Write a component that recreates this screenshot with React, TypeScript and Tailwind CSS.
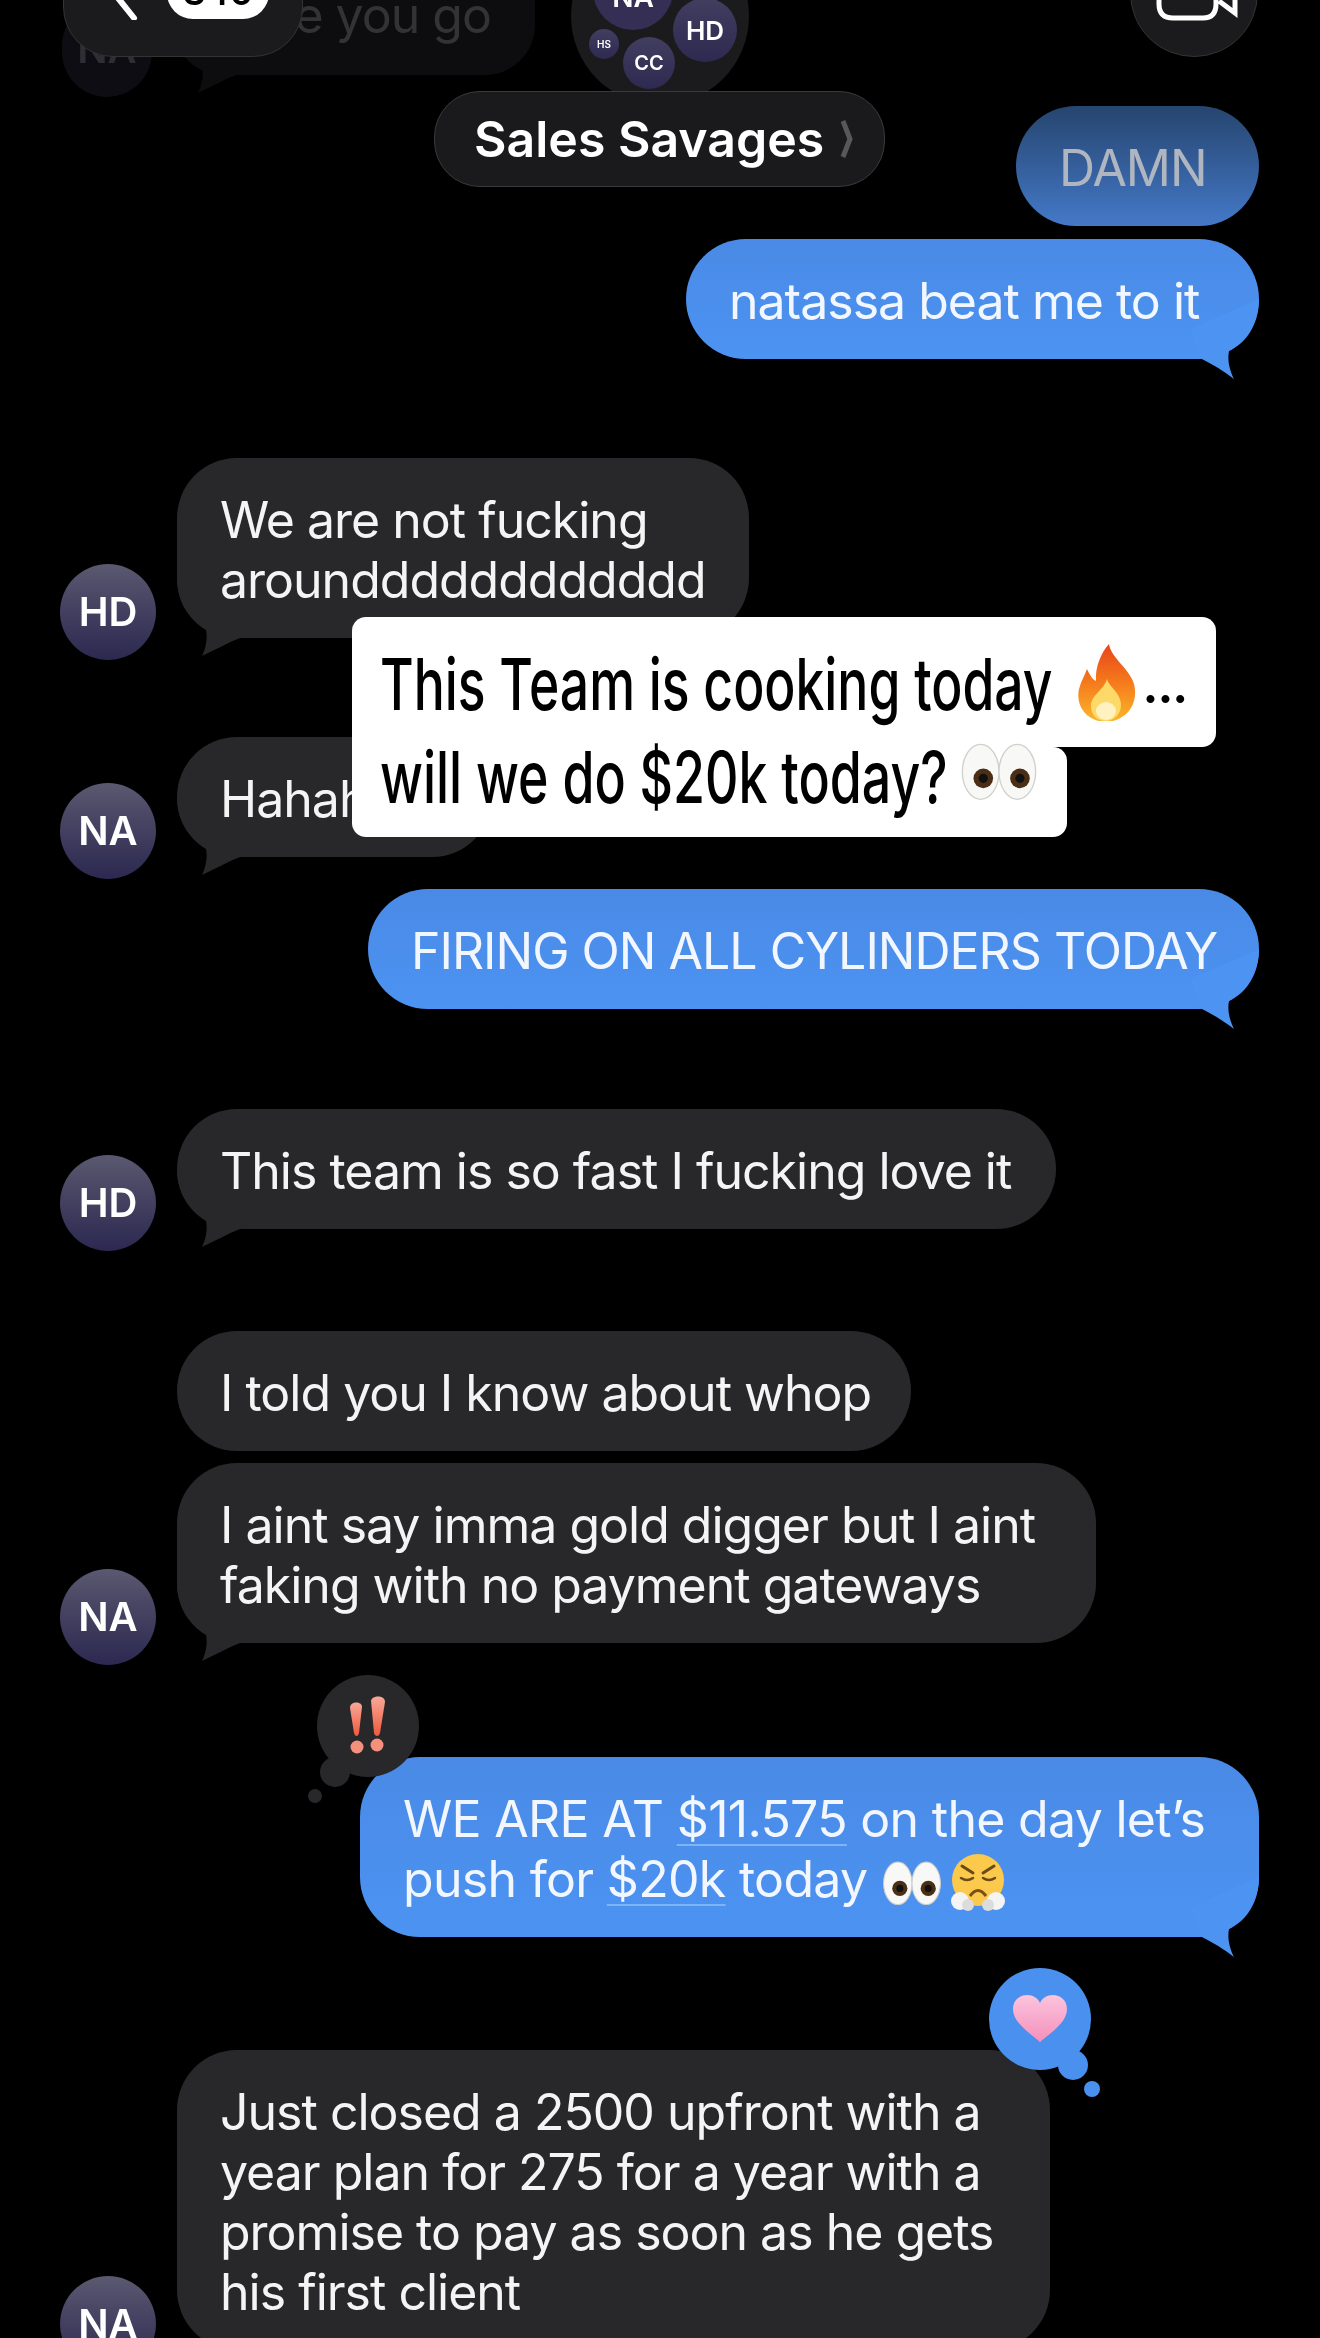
import React from "react";

const font = { fontFamily: "Inter, 'Noto Sans', sans-serif" };

function TailLeft({ color }: { color: string }) {
  return (
    <svg className="absolute left-0 bottom-[-20px]" width="70" height="80" viewBox="0 0 70 80">
      <path d="M0 0 C0 22 10 40 29 52 C31 62 28 72 25 78 C38 72 50 65 63 60 L70 20 Z" fill={color} />
    </svg>
  );
}

function TailRight({ color }: { color: string }) {
  return (
    <svg className="absolute right-0 bottom-[-21px]" width="69" height="81" viewBox="0 0 69 81">
      <path d="M69 0 C69 26 56 44 39 52 C37 62 40 72 44 80 C34 72 22 65 10 59 L0 30 Z" fill={color} />
    </svg>
  );
}

function Avatar({ label }: { label: string }) {
  return (
    <div className="flex h-[96px] w-[96px] shrink-0 items-center justify-center rounded-full bg-gradient-to-b from-[#5b5870] to-[#2c2850] text-[40px] font-semibold text-white">
      {label}
    </div>
  );
}

const leftBubble = "relative rounded-[60px] bg-[#28282b] pb-[28px] pl-[43px] pt-[32px] text-[50px] leading-[60px] tracking-[-1px] text-[#f4f4f4] ";

function Left({ label, top, tail = true, width, children }: { label?: string; top: string; tail?: boolean; width: string; children: React.ReactNode }) {
  return (
    <div className={"flex items-end gap-[21px] pl-[60px] " + top}>
      <div className="-mb-[22px] h-[96px] w-[96px] shrink-0">{label ? <Avatar label={label} /> : null}</div>
      <div className={leftBubble + width}>
        {tail ? <TailLeft color="#28282b" /> : null}
        <div className="relative whitespace-pre">{children}</div>
      </div>
    </div>
  );
}

function Right({ top, width, children, extra }: { top: string; width: string; children: React.ReactNode; extra?: React.ReactNode }) {
  return (
    <div className={"flex justify-end pr-[61px] " + top}>
      <div className={"relative rounded-[60px] bg-gradient-to-b from-[#4a8ae6] to-[#4c93f2] pb-[28px] pl-[43px] pt-[32px] text-[50px] leading-[60px] tracking-[-1px] text-[#f2f7ff] " + width}>
        <TailRight color="#4c93f2" />
        {extra}
        <div className="relative whitespace-pre">{children}</div>
      </div>
    </div>
  );
}

function Eyes({ size }: { size: number }) {
  return (
    <svg width={size} height={size * 0.72} viewBox="0 0 60 44" className="inline-block">
      <ellipse cx="16" cy="22" rx="14" ry="21" fill="#f8f8f6" stroke="#d0d0cc" strokeWidth="1" />
      <ellipse cx="44" cy="22" rx="14" ry="21" fill="#f8f8f6" stroke="#d0d0cc" strokeWidth="1" />
      <circle cx="18" cy="27" r="7.5" fill="#4a2f16" />
      <circle cx="46" cy="27" r="7.5" fill="#4a2f16" />
      <circle cx="18" cy="27" r="3.5" fill="#111" />
      <circle cx="46" cy="27" r="3.5" fill="#111" />
    </svg>
  );
}

function Flame() {
  return (
    <svg width="64" height="80" viewBox="0 0 64 80">
      <defs>
        <linearGradient id="fl" x1="0" y1="0" x2="0" y2="1">
          <stop offset="0" stopColor="#e8451a" />
          <stop offset="0.5" stopColor="#f57a1c" />
          <stop offset="1" stopColor="#fbb62a" />
        </linearGradient>
      </defs>
      <path d="M34 1 C36 14 50 22 57 36 C64 50 60 72 38 78 L24 78 C8 74 1 60 4 46 C6 38 10 32 12 26 C15 32 17 36 21 38 C20 24 26 10 34 1 Z" fill="url(#fl)" />
      <path d="M32 36 C34 44 46 50 46 62 C46 72 38 78 31 78 C22 78 16 72 16 63 C16 52 28 48 32 36 Z" fill="#fdd96a" />
      <ellipse cx="31" cy="68" rx="10" ry="9" fill="#fff2c0" />
    </svg>
  );
}

function HuffFace() {
  return (
    <svg width="62" height="58" viewBox="0 0 62 58">
      <circle cx="31" cy="26" r="26" fill="#fbc94b" />
      <path d="M15 12 L26 19 M47 12 L36 19" stroke="#6b4a1a" strokeWidth="3" strokeLinecap="round" />
      <path d="M14 24 Q20 28 26 24 M36 24 Q42 28 48 24" stroke="#6b4a1a" strokeWidth="2.5" fill="none" strokeLinecap="round" />
      <path d="M23 42 Q31 31 39 42" stroke="#7a4e1a" strokeWidth="3" fill="none" />
      <circle cx="13" cy="47" r="9" fill="#f4f4f4" />
      <circle cx="49" cy="47" r="9" fill="#f4f4f4" />
      <circle cx="21" cy="51" r="6" fill="#dcdcdc" />
      <circle cx="41" cy="51" r="6" fill="#dcdcdc" />
    </svg>
  );
}

function Bangs() {
  return (
    <svg width="44" height="62" viewBox="0 0 44 62">
      <defs>
        <linearGradient id="ba" x1="0" y1="0" x2="0" y2="1">
          <stop offset="0" stopColor="#f8a898" />
          <stop offset="1" stopColor="#ee5a3c" />
        </linearGradient>
      </defs>
      <path d="M4 13 C4 6 16 6 16 12 L13 38 C12 42 9 42 8 38 Z" fill="url(#ba)" />
      <path d="M25 6 C26 0 39 0 39 7 L34 38 C33 42 29 42 28 38 Z" fill="url(#ba)" />
      <circle cx="11" cy="52" r="6.5" fill="#f4907c" />
      <circle cx="31" cy="50" r="6.5" fill="#f4907c" />
    </svg>
  );
}

function Heart() {
  return (
    <svg width="56" height="48" viewBox="0 0 56 48">
      <defs>
        <linearGradient id="he" x1="0" y1="0" x2="0" y2="1">
          <stop offset="0" stopColor="#fbc4dd" />
          <stop offset="1" stopColor="#f58fbb" />
        </linearGradient>
      </defs>
      <path d="M28 47 C18 38 1 28 1 14 C1 5 8 0 15 0 C21 0 26 3 28 8 C30 3 35 0 41 0 C48 0 55 5 55 14 C55 28 38 38 28 47 Z" fill="url(#he)" />
    </svg>
  );
}

export default function App() {
  return (
    <div className="relative h-[2338px] w-[1320px] overflow-hidden bg-black blur-[0.5px]" style={font}>
      {/* scrolled-away message under the header */}
      <div className="-mt-[45px] flex items-end gap-[21px] pl-[62px]">
        <div className="-mb-[22px] flex h-[96px] w-[90px] items-center justify-center rounded-full bg-[#0e0d14] text-[40px] font-semibold text-[#2e2e34]">NA</div>
        <div className="relative flex h-[120px] w-[362px] items-center justify-end rounded-[50px] bg-[#0d0d0f] pr-[44px] text-[50px] tracking-[-1px] text-[#333336]">
          <TailLeft color="#0d0d0f" />
          <span className="relative">e you go</span>
        </div>
      </div>

      <div className="mt-[31px] flex justify-end pr-[61px]">
        <div className="w-[243px] rounded-[60px] bg-gradient-to-b from-[#26456f] to-[#4479c9] pb-[28px] pl-[43px] pt-[32px] text-[50px] leading-[60px] tracking-[-1px] text-[#b0b6bf]">DAMN</div>
      </div>
      <Right top="mt-[13px]" width="w-[573px]">natassa beat me to it</Right>

      <Left label="HD" top="mt-[99px]" width="w-[572px]">{"We are not fucking\naroundddddddddddd"}</Left>
      <Left label="NA" top="mt-[99px]" width="w-[315px]">Hahah</Left>
      <Right top="mt-[32px]" width="w-[891px]">FIRING ON ALL CYLINDERS TODAY</Right>
      <Left label="HD" top="mt-[100px]" width="w-[879px]">This team is so fast I fucking love it</Left>
      <Left top="mt-[102px]" tail={false} width="w-[734px]">I told you I know about whop</Left>
      <Left label="NA" top="mt-[12px]" width="w-[919px]">{"I aint say imma gold digger but I aint\nfaking with no payment gateways"}</Left>

      <Right
        top="mt-[114px]"
        width="w-[899px]"
        extra={
          <>
            <div className="absolute left-[-43px] top-[-82px] flex h-[102px] w-[102px] items-center justify-center rounded-full bg-[#28282b]"><Bangs /></div>
            <div className="absolute left-[-40px] top-[0px] h-[30px] w-[30px] rounded-full bg-[#28282b]" />
            <div className="absolute left-[-52px] top-[32px] h-[14px] w-[14px] rounded-full bg-[#28282b]" />
          </>
        }
      >
        <span className="tracking-[-0.7px]">
          <span>WE ARE AT </span>
          <span className="underline decoration-[#7db6f8] decoration-2 underline-offset-[7px]">$11.575</span>
          <span>{" on the day let’s\npush for "}</span>
          <span className="underline decoration-[#7db6f8] decoration-2 underline-offset-[7px]">$20k</span>
          <span> today </span>
        </span>
        <span className="inline-flex h-[30px] items-center gap-[4px] align-middle"><Eyes size={62} /><HuffFace /></span>
      </Right>

      <div className="mt-[113px] flex items-end gap-[21px] pl-[60px]">
        <div className="-mb-[22px] h-[96px] w-[96px] shrink-0"><Avatar label="NA" /></div>
        <div className="relative w-[873px] rounded-[60px] bg-[#28282b] pb-[28px] pl-[43px] pt-[32px] text-[50px] leading-[60px] tracking-[-1px] text-[#f4f4f4]">
          <div className="whitespace-pre">{"Just closed a 2500 upfront with a\nyear plan for 275 for a year with a\npromise to pay as soon as he gets\nhis first client"}</div>
          <div className="absolute left-[812px] top-[-82px] flex h-[102px] w-[102px] items-center justify-center rounded-full bg-[#4a90ee]"><Heart /></div>
          <div className="absolute left-[881px] top-[0px] h-[30px] w-[30px] rounded-full bg-[#4a90ee]" />
          <div className="absolute left-[907px] top-[31px] h-[16px] w-[16px] rounded-full bg-[#4a90ee]" />
        </div>
      </div>

      {/* header over the messages */}
      <div className="absolute left-[63px] top-[-60px] flex h-[117px] w-[240px] items-end rounded-[50px] border border-[#333] bg-[#1b1b1d]">
        <svg className="absolute left-[40px] bottom-[36px]" width="34" height="44" viewBox="0 0 34 44">
          <path d="M30 42 L6 12 L30 -14" stroke="#fff" strokeWidth="6" strokeLinecap="round" fill="none" />
        </svg>
        <div className="absolute bottom-[37px] left-[103px] flex h-[60px] w-[102px] items-end justify-center rounded-[26px] bg-white pb-[9px] text-[36px] font-semibold leading-none text-black">340</div>
      </div>
      <div className="absolute left-[571px] top-[-73px] h-[178px] w-[178px] rounded-full bg-[#1b1b1d]">
        <div className="absolute left-[22px] top-[23px] flex h-[80px] w-[80px] items-end justify-center rounded-full bg-[#352f55] pb-[19px] text-[28px] font-semibold leading-none text-white">NA</div>
        <div className="absolute left-[102px] top-[71px] flex h-[64px] w-[64px] items-center justify-center rounded-full bg-gradient-to-b from-[#423e60] to-[#2e2950] text-[26px] font-semibold text-white">HD</div>
        <div className="absolute left-[52px] top-[110px] flex h-[52px] w-[52px] items-center justify-center rounded-full bg-gradient-to-b from-[#423e60] to-[#2e2950] text-[20px] font-semibold text-white">CC</div>
        <div className="absolute left-[18px] top-[102px] flex h-[30px] w-[30px] items-center justify-center rounded-full bg-gradient-to-b from-[#423e60] to-[#2e2950] text-[10px] font-semibold text-white">HS</div>
      </div>
      <div className="absolute left-[434px] top-[91px] flex h-[96px] w-[451px] items-center gap-[16px] rounded-[46px] border border-[#3a3a3c] bg-[#1a1a1c] pl-[39px] text-[50px] font-semibold text-white">
        <span>Sales Savages</span>
        <svg width="14" height="38" viewBox="0 0 14 38"><path d="M3 1 L10 19 L3 37" stroke="#58585a" strokeWidth="5" fill="none" /></svg>
      </div>
      <div className="absolute left-[1130px] top-[-71px] h-[128px] w-[128px] rounded-full border border-[#333] bg-[#1b1b1d]">
        <svg className="absolute left-[24px] top-[66px]" width="84" height="30" viewBox="0 0 84 30">
          <path d="M4 -10 V8 Q4 22 18 22 H48 Q61 22 61 8 V-10 M64 5 L80 17 V-10" stroke="#fff" strokeWidth="5" fill="none" />
        </svg>
      </div>

      {/* story caption */}
      <div className="absolute left-[352px] top-[617px] flex flex-col items-start text-black">
        <div className="flex h-[130px] w-[864px] items-end rounded-[14px] rounded-bl-none bg-white pb-[18px] pl-[28px]">
          <span className="inline-block w-[672px] origin-left scale-x-[0.717] whitespace-nowrap text-[72px] font-medium leading-[90px]">This Team is cooking today</span>
          <span className="mb-[6px] ml-[23px] inline-block"><Flame /></span>
          <span className="mb-[20px] ml-[4px] text-[40px] font-black leading-none">...</span>
        </div>
        <div className="flex h-[90px] w-[715px] items-start rounded-b-[14px] rounded-tr-[14px] bg-white pl-[28px]">
          <span className="-mt-[15px] inline-block w-[565px] origin-left scale-x-[0.72] whitespace-nowrap text-[72px] font-medium leading-[90px]">will we do $20k today?</span>
          <span className="-mt-[4px] ml-[14px] inline-block"><Eyes size={80} /></span>
        </div>
      </div>
    </div>
  );
}
